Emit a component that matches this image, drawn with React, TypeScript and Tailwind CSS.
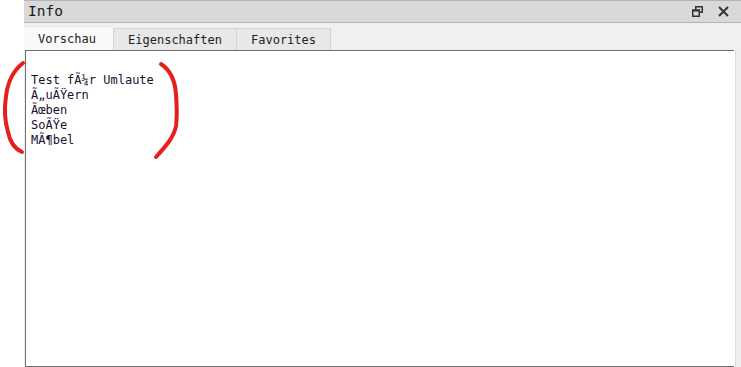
import React from "react";

const mono = { fontFamily: '"DejaVu Sans Mono", "Liberation Mono", monospace' };

export default function App() {
  const lines = ["Test fÃ¼r Umlaute", "Ã„uÃŸern", "Ãœben", "SoÃŸe", "MÃ¶bel"];
  return (
    <div className="relative w-[741px] h-[367px] bg-white flex overflow-hidden">
      <div className="w-[24px] shrink-0 bg-white" />
      <div className="flex-1 flex flex-col bg-[#f0f0f0]">
        {/* title bar */}
        <div className="h-[23px] shrink-0 bg-[#d9d9d9] border-t border-b border-[#b4b4b4] flex items-center pl-[4px] pr-[12px]">
          <span className="text-[14.5px] text-[#1a1a1a] leading-none" style={mono}>Info</span>
          <div className="flex-1" />
          <svg width="11" height="11" viewBox="0 0 11 11" className="mr-[15px]">
            <rect x="3.75" y="0.75" width="6.5" height="5.5" fill="none" stroke="#333" strokeWidth="1.5" />
            <rect x="0.75" y="4.25" width="6.5" height="6" fill="#d9d9d9" stroke="#333" strokeWidth="1.5" />
            <rect x="0" y="3.5" width="8" height="2" fill="#333" />
          </svg>
          <svg width="11" height="11" viewBox="0 0 11 11">
            <path d="M1 1 L10 10 M10 1 L1 10" stroke="#333" strokeWidth="2" />
          </svg>
        </div>
        {/* tabs */}
        <div className="h-[27px] shrink-0 flex items-end">
          <div className="w-[89px] h-[24px] bg-[#f9f9f9] border-t border-[#e4e4e4] flex items-center justify-center">
            <span className="text-[12px] text-[#222] pr-[3px] pt-[1px]" style={mono}>Vorschau</span>
          </div>
          <div className="w-[124px] h-[22px] bg-[#e8e8e8] border border-b-0 border-[#d4d4d4] flex items-center justify-center">
            <span className="text-[12px] text-[#222] pt-[1px]" style={mono}>Eigenschaften</span>
          </div>
          <div className="w-[94px] h-[22px] bg-[#e8e8e8] border border-b-0 border-l-0 border-[#d4d4d4] flex items-center justify-center">
            <span className="text-[12px] text-[#222] pt-[1px]" style={mono}>Favorites</span>
          </div>
        </div>
        {/* content */}
        <div className="flex-1 flex">
          <div className="flex-1 ml-[1px] bg-white border-l border-t border-b border-[#707070] pt-[22px] pl-[5px]">
            {lines.map((l, i) => (
              <div key={i} className="text-[12px] leading-[15px] text-[#1b1030] whitespace-pre" style={mono}>
                {l}
              </div>
            ))}
          </div>
          <div className="w-[1px] bg-white" />
          <div className="w-[6px] bg-[#efefef] border-l border-[#dcdcdc]" />
        </div>
      </div>
      {/* red annotation brackets */}
      <svg className="absolute left-0 top-0 pointer-events-none" width="741" height="367">
        <path
          d="M23 63 C14 70 8 80 6 96 C4 110 5 122 8 132 C10 142 15 149 22 152"
          fill="none"
          stroke="#e3201c"
          strokeWidth="4"
          strokeLinecap="round"
        />
        <path
          d="M161 64 C170 70 175 80 176 94 C177 108 177 118 176 126 C174 137 166 146 156 157"
          fill="none"
          stroke="#e3201c"
          strokeWidth="4"
          strokeLinecap="round"
        />
      </svg>
    </div>
  );
}
